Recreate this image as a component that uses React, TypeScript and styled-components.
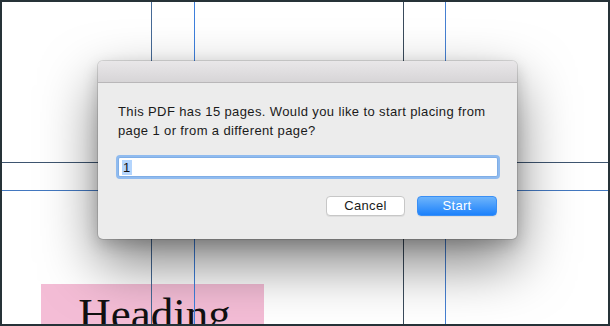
import styled, { createGlobalStyle } from "styled-components";

const GlobalStyle = createGlobalStyle`
  html, body {
    margin: 0;
    padding: 0;
    background: #ffffff;
  }
  body {
    font-family: "Liberation Sans", Arial, sans-serif;
  }
`;

type Guide = { pos: number; color: string };

const verticalGuides: Guide[] = [
  { pos: 151, color: "#466a96" },
  { pos: 194, color: "#3d7fdc" },
  { pos: 403, color: "#3a4b5c" },
  { pos: 445, color: "#4680d2" },
];

const horizontalGuides: Guide[] = [
  { pos: 162, color: "#3e5570" },
  { pos: 190, color: "#4378c0" },
];

export default function App() {
  return (
    <>
      <GlobalStyle />
      <Page>
        <Canvas>
          <TextFrame>
            <Heading>Heading</Heading>
          </TextFrame>
          {horizontalGuides.map((g) => (
            <HLine key={g.pos} $pos={g.pos} $color={g.color} />
          ))}
          {verticalGuides.map((g) => (
            <VLine key={g.pos} $pos={g.pos} $color={g.color} />
          ))}
        </Canvas>

        <Dialog>
          <TitleBar />
          <Body>
            <Message>
              This PDF has 15 pages. Would you like to start placing from
              page 1 or from a different page?
            </Message>
            <Field>
              <Selected>1</Selected>
            </Field>
            <ButtonRow>
              <Button>Cancel</Button>
              <Button $primary>Start</Button>
            </ButtonRow>
          </Body>
        </Dialog>
      </Page>
    </>
  );
}

const Page = styled.div`
  position: relative;
  width: 610px;
  height: 326px;
  box-sizing: border-box;
  border: 2px solid #263238;
  overflow: hidden;
  background: #ffffff;
`;

const Canvas = styled.div`
  position: absolute;
  inset: -2px;
`;

const TextFrame = styled.div`
  position: absolute;
  left: 41px;
  top: 284px;
  width: 223px;
  height: 60px;
  background: #f4bdd6;
  display: flex;
  justify-content: center;
`;

const Heading = styled.span`
  font-family: "Liberation Serif", "Times New Roman", serif;
  font-size: 45px;
  line-height: 1;
  color: #111;
  margin-top: 8px;
  padding-left: 4px;
`;

const VLine = styled.div<{ $pos: number; $color: string }>`
  position: absolute;
  top: 0;
  bottom: 0;
  left: ${(p) => p.$pos}px;
  width: 1px;
  background: ${(p) => p.$color};
`;

const HLine = styled.div<{ $pos: number; $color: string }>`
  position: absolute;
  left: 0;
  right: 0;
  top: ${(p) => p.$pos}px;
  height: 1px;
  background: ${(p) => p.$color};
`;

const Dialog = styled.div`
  position: absolute;
  left: 96px;
  top: 59px;
  width: 419px;
  height: 178px;
  background: #ececec;
  border-radius: 5px;
  box-shadow: 0 0 0 1px rgba(0, 0, 0, 0.12), 0 24px 55px rgba(0, 0, 0, 0.5),
    0 6px 16px rgba(0, 0, 0, 0.18);
  overflow: hidden;
  display: flex;
  flex-direction: column;
`;

const TitleBar = styled.div`
  height: 21px;
  background: linear-gradient(#e9e7e9, #d7d5d7);
  border-bottom: 1px solid #b9b7b9;
`;

const Body = styled.div`
  flex: 1;
  padding: 19px 19px 0 20px;
  display: flex;
  flex-direction: column;
`;

const Message = styled.p`
  margin: 0;
  font-size: 13px;
  letter-spacing: 0.38px;
  line-height: 19px;
  color: #1a1a1a;
`;

const Field = styled.div`
  margin: 17px 0 0 0;
  height: 20px;
  box-sizing: border-box;
  background: #ffffff;
  border: 1px solid #80aee6;
  border-radius: 2px;
  box-shadow: 0 0 0 2px #90bbef;
  padding: 2px 3px;
  display: flex;
  align-items: center;
`;

const Selected = styled.span`
  font-size: 13px;
  line-height: 15px;
  padding: 0 2px 0 1px;
  color: #111;
  background: #b4d5fd;
`;

const ButtonRow = styled.div`
  margin-top: 19px;
  display: flex;
  justify-content: flex-end;
  gap: 12px;
  padding-right: 1px;
`;

const Button = styled.button<{ $primary?: boolean }>`
  width: ${(p) => (p.$primary ? 80 : 79)}px;
  height: 20px;
  box-sizing: border-box;
  padding: 0;
  font-family: "Liberation Sans", Arial, sans-serif;
  font-size: 13px;
  letter-spacing: 0.3px;
  line-height: 18px;
  border-radius: 4px;
  color: ${(p) => (p.$primary ? "#ffffff" : "#1a1a1a")};
  background: ${(p) =>
    p.$primary ? "linear-gradient(#6db4fb, #1c81fb)" : "#ffffff"};
  border: 1px solid ${(p) => (p.$primary ? "#3a8ff5" : "#c7c7c7")};
  box-shadow: 0 1px 0 rgba(0, 0, 0, 0.06);
`;
